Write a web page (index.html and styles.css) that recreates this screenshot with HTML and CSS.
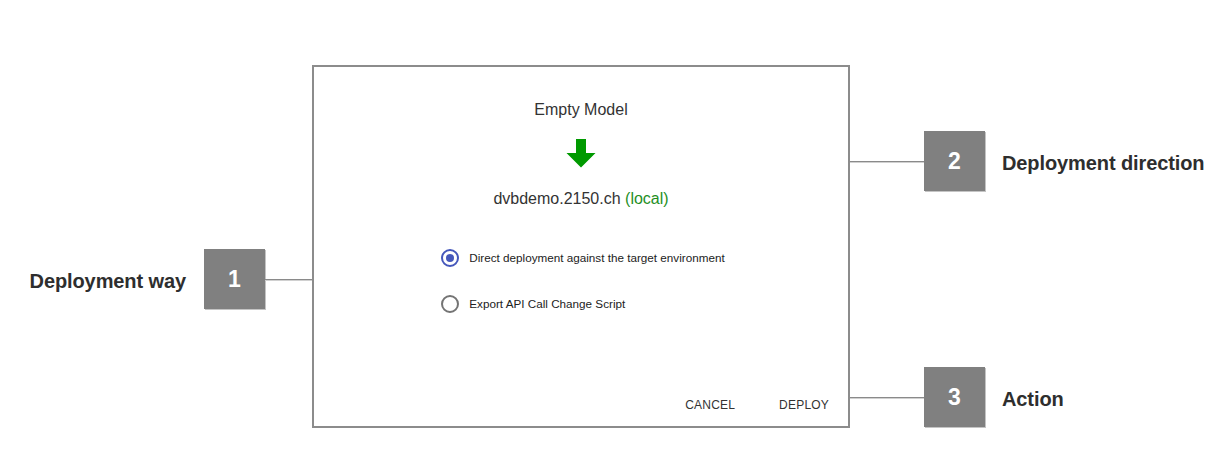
FILE: index.html
```html
<!DOCTYPE html>
<html lang="en">
<head>
    <meta charset="UTF-8">
    <title>Deployment dialog overview</title>
    <link rel="stylesheet" href="styles.css">
</head>
<body>
    <div class="diagram">
        <div class="side side-left">
            <div class="callout callout-way">
                <span class="callout-label">Deployment way</span>
                <span class="badge">1</span>
                <span class="connector"></span>
            </div>
        </div>

        <div class="dialog">
            <div class="source">Empty Model</div>
            <svg class="arrow" width="30" height="29" viewBox="0 0 30 29">
                <path d="M10 0 H20 V14 H29.5 L15 28.5 L0.5 14 H10 Z" fill="#009a00"/>
            </svg>
            <div class="target">dvbdemo.2150.ch <span class="env">(local)</span></div>

            <div class="options">
                <label class="option">
                    <span class="radio checked"></span>
                    Direct deployment against the target environment
                </label>
                <label class="option">
                    <span class="radio"></span>
                    Export API Call Change Script
                </label>
            </div>

            <div class="actions">
                <span class="btn">CANCEL</span>
                <span class="btn">DEPLOY</span>
            </div>
        </div>

        <div class="side side-right">
            <div class="callout callout-direction">
                <span class="connector wide"></span>
                <span class="badge">2</span>
                <span class="callout-label">Deployment direction</span>
            </div>
            <div class="callout callout-action">
                <span class="connector wide"></span>
                <span class="badge">3</span>
                <span class="callout-label">Action</span>
            </div>
        </div>
    </div>
</body>
</html>
```

FILE: styles.css
```css
body {
    margin: 0;
    background: #fff;
    font-family: "Liberation Sans", Arial, sans-serif;
    color: #333;
}
.diagram {
    display: flex;
    padding-top: 65px;
}
.side {
    display: flex;
    flex-direction: column;
}
.side-left {
    width: 312px;
    align-items: flex-end;
}
.callout {
    display: flex;
    align-items: center;
}
.callout-way {
    margin-top: 184px;
}
.callout-label {
    padding-top: 5px;
    font-size: 20px;
    font-weight: bold;
    color: #2e2e2e;
    letter-spacing: -0.1px;
}
.callout-way .callout-label {
    margin-right: 18px;
}
.side-right .callout-label {
    margin-left: 17px;
}
.badge {
    width: 61px;
    height: 60px;
    background: #808080;
    box-shadow: 1px 1px 0 #c4c4c4;
    color: #fff;
    font-size: 23px;
    font-weight: bold;
    display: flex;
    align-items: center;
    justify-content: center;
}
.connector {
    width: 47px;
    height: 1px;
    margin-top: 1px;
    background: #8a8a8a;
    border-bottom: 1px solid #d0d0d0;
}
.connector.wide {
    width: 74px;
}
.callout-direction {
    margin-top: 66px;
}
.callout-action {
    margin-top: 176px;
}

.dialog {
    width: 534px;
    height: 359px;
    border: 2px solid #8c8c8c;
    display: flex;
    flex-direction: column;
    align-items: center;
}
.source {
    margin-top: 33px;
    font-size: 16px;
    line-height: 20px;
}
.arrow {
    display: block;
    margin-top: 19px;
}
.target {
    margin-top: 21px;
    font-size: 16px;
    line-height: 20px;
}
.env {
    color: #1f8f1f;
}
.options {
    margin-top: 39px;
    margin-left: 4px;
    display: flex;
    flex-direction: column;
    gap: 26px;
}
.option {
    display: flex;
    align-items: center;
    gap: 10px;
    font-size: 11.7px;
    line-height: 20px;
    color: #222;
}
.radio {
    width: 14px;
    height: 14px;
    border: 2px solid #747474;
    border-radius: 50%;
    display: flex;
    align-items: center;
    justify-content: center;
}
.radio.checked {
    border-color: #4557bb;
}
.radio.checked::after {
    content: "";
    width: 8px;
    height: 8px;
    border-radius: 50%;
    background: #4557bb;
}
.actions {
    margin-top: auto;
    align-self: flex-end;
    display: flex;
    gap: 44px;
    padding: 0 19px 13px 0;
}
.btn {
    font-size: 12px;
    line-height: 16px;
    letter-spacing: 0.2px;
    color: #333;
}
```
